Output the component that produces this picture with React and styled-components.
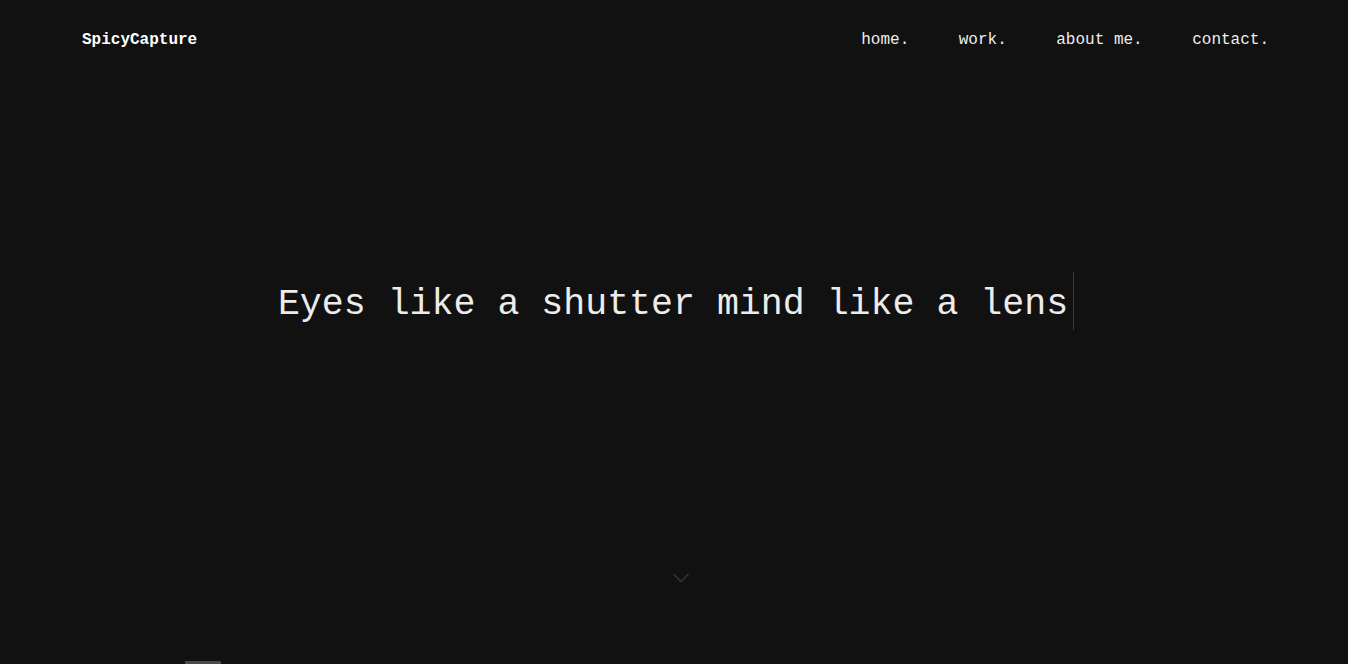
import * as React from "react";
import styled, { createGlobalStyle } from "styled-components";

const GlobalStyle = createGlobalStyle`
  html, body {
    margin: 0;
    padding: 0;
    background: #111111;
  }
  body {
    font-family: "Liberation Mono", "DejaVu Sans Mono", monospace;
    color: #ffffff;
    overflow: hidden;
  }
`;

const navLinks = ["home.", "work.", "about me.", "contact."];

export default function App() {
  return (
    <>
      <GlobalStyle />
      <Page>
        <Header>
          <Logo>SpicyCapture</Logo>
          <Nav>
            {navLinks.map((link) => (
              <NavLink key={link} href="#">
                {link}
              </NavLink>
            ))}
          </Nav>
        </Header>
        <Hero>
          <Headline>
            Eyes like a shutter mind like a lens
            <Cursor />
          </Headline>
          <ScrollDown aria-label="Scroll down">
            <svg width="18" height="12" viewBox="0 0 18 12" fill="none">
              <path d="M1.5 2 L9 9.5 L16.5 2" stroke="#343434" strokeWidth="1.6" />
            </svg>
          </ScrollDown>
        </Hero>
        <Footer>
          <Indicator />
        </Footer>
      </Page>
    </>
  );
}

const Page = styled.div`
  display: flex;
  flex-direction: column;
  height: 100vh;
  background: #111111;
`;

const Header = styled.header`
  display: flex;
  align-items: center;
  justify-content: space-between;
  height: 80px;
  padding: 0 79px 0 82px;
`;

const Logo = styled.div`
  font-size: 16px;
  font-weight: 700;
  color: #ffffff;
`;

const Nav = styled.nav`
  display: flex;
  gap: 49.5px;
`;

const NavLink = styled.a`
  font-size: 16px;
  color: #eeeeee;
  text-decoration: none;
`;

const Hero = styled.main`
  flex: 1;
  display: flex;
  flex-direction: column;
  align-items: center;
  padding-top: 196px;
`;

const Headline = styled.h1`
  display: flex;
  align-items: center;
  margin: 0;
  padding-left: 4px;
  font-size: 36.6px;
  font-weight: 400;
  line-height: 58px;
  color: #ececec;
  letter-spacing: 0;
`;

const Cursor = styled.span`
  display: inline-block;
  align-self: flex-start;
  width: 1px;
  height: 58px;
  margin-top: -4px;
  margin-left: 5px;
  background: #3a3a3a;
`;

const ScrollDown = styled.div`
  margin-top: 238px;
  margin-left: 14px;
  display: flex;
  justify-content: center;
  line-height: 0;
`;

const Footer = styled.div`
  display: flex;
  align-items: flex-end;
  height: 3px;
  padding-left: 185px;
`;

const Indicator = styled.div`
  width: 36px;
  height: 3px;
  background: #4a4a4a;
`;
